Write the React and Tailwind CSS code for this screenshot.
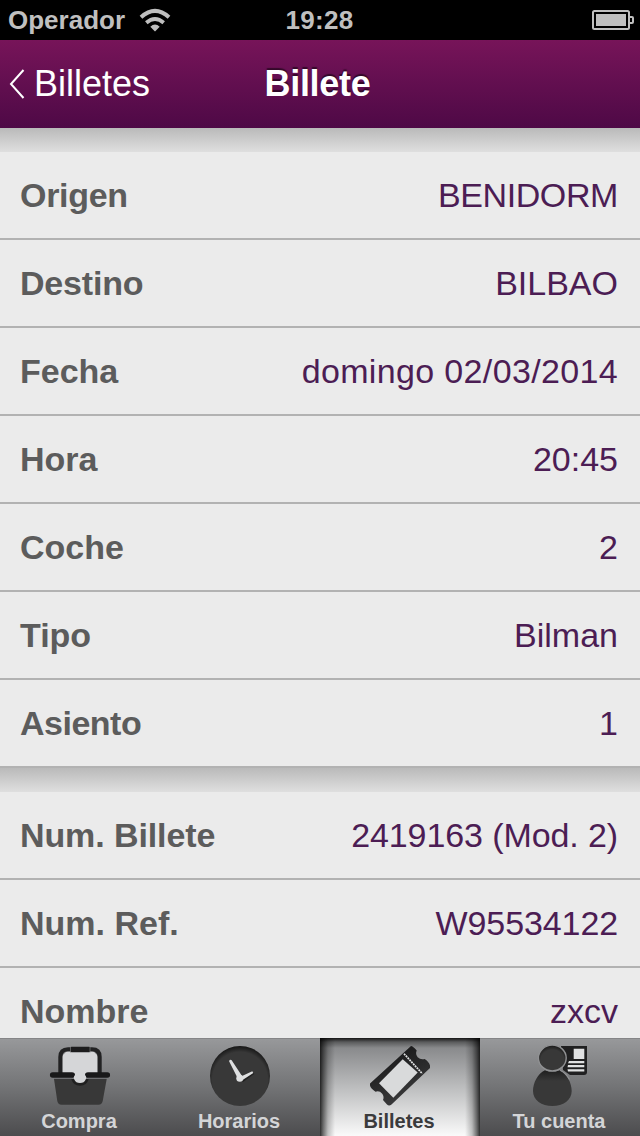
import React, { useState } from 'react';

const trip = [
    { label: 'Origen', value: 'BENIDORM', labelClass: 'tracking-[-0.3px]', valueClass: 'tracking-[-0.4px]' },
    { label: 'Destino', value: 'BILBAO', labelClass: 'tracking-[-0.2px]' },
    { label: 'Fecha', value: 'domingo 02/03/2014', valueClass: 'tracking-[0.35px]' },
    { label: 'Hora', value: '20:45' },
    { label: 'Coche', value: '2' },
    { label: 'Tipo', value: 'Bilman' },
    { label: 'Asiento', value: '1', labelClass: 'tracking-[-0.5px]' },
];

const ticket = [
    { label: 'Num. Billete', value: '2419163 (Mod. 2)', labelClass: 'tracking-[-0.1px]', valueClass: 'tracking-[-0.1px]' },
    { label: 'Num. Ref.', value: 'W95534122', valueClass: 'tracking-[-0.1px]' },
    { label: 'Nombre', value: 'zxcv' },
];

const BasketIcon = () => (
    <svg viewBox="0 0 64 64" className="w-16 h-16">
        <path d="M14 29V12l5-5h26l5 5v17H38a6.2 6.2 0 1 1-12 0z" fill="#d5d6d8" />
        <path d="M12.4 29V13q0-7.600 7.600-7.600h24q7.600 0 7.600 7.600v16" fill="none" stroke="#222223" strokeWidth="4.200" />
        <rect x="22.500" y="2.700" width="19.500" height="5.600" rx="1" fill="#1c1c1d" />
        <path d="M22.500 3v5.500M42 3v5.500" stroke="#77787a" strokeWidth="0.700" />
        <path d="M6 35h19.300a7.200 7.200 0 0 0 13.400 0H58.700L54.700 57q-.7 3.700-4.200 3.700h-37q-3.500 0-4.200-3.700z" fill="#383838" />
        <path d="M23.300 35h17.400a9 9 0 0 1-17.400 0z" fill="#202020" />
        <path d="M4.700 28.200H24q3 .4 3 2.600l-1.500 3H4.700a2.700 2.700 0 0 1 0-5.600zM59.300 28.200H40q-3 .4-3 2.600l1.500 3h20.800a2.700 2.700 0 0 0 0-5.600z" fill="#19191a" />
        <path d="M27 28h10v4q2 1 .8 3.200a6.300 6.300 0 0 1-11.600 0Q25 33 27 32z" fill="#d5d6d8" />
        <path d="M6 34.500h18M40 34.500h18.700" stroke="#6d6e70" strokeWidth="0.900" />
    </svg>
);

const ClockIcon = () => (
    <svg viewBox="0 0 64 64" className="w-16 h-16">
        <defs>
            <radialGradient id="clockFace" cx="0.500" cy="0.560" r="0.560">
                <stop offset="0.820" stopColor="#383838" />
                <stop offset="1" stopColor="#161616" />
            </radialGradient>
        </defs>
        <circle cx="32" cy="32" r="30" fill="url(#clockFace)" />
        <path d="M31 36l-8.600-18 2-.7L35 34.200l10.500-5.700.8 1.500L35 38z" fill="#000" opacity="0.400" />
        <path d="M29.800 34.500l-8.700-17.200q.6-2.200 2.600-1.100L34 31.900l10.300-4.700 1 1.900-10.700 6.800z" fill="#dedfe0" />
        <circle cx="31.800" cy="34.300" r="3.500" fill="#dedfe0" />
    </svg>
);

const TicketIcon = () => (
    <svg viewBox="0 0 64 64" className="w-16 h-16">
        <defs>
            <linearGradient id="ticketBody" x1="0" y1="0" x2="0.500" y2="1">
                <stop offset="0.200" stopColor="#19191a" />
                <stop offset="1" stopColor="#3b3b3c" />
            </linearGradient>
        </defs>
        <path d="M43 2q2 .2 5.700 4.500-1.600 3.500 1 6.700 3 3 7 1.800 4.500 3 5.300 6.500v2.500L23.500 60.500q-2.500 1.800-4.500 0l-4-4.500q1.500-3.500-1-6.500t-6.500-1.800Q2.500 44.500 2 41.500v-2z" fill="url(#ticketBody)" />
        <path d="M34.700 15.300l15 13.200-24.400 25.200L11 39.300z" fill="#d9dadb" />
        <path d="M36 9.700l18.300 20" stroke="#e3e4e5" strokeWidth="1.700" strokeDasharray="1.900 0.800" />
    </svg>
);

const AccountIcon = () => (
    <svg viewBox="0 0 64 64" className="w-16 h-16">
        <defs>
            <radialGradient id="head" cx="0.500" cy="0.600" r="0.600">
                <stop offset="0.700" stopColor="#383838" />
                <stop offset="1" stopColor="#171717" />
            </radialGradient>
            <linearGradient id="torso" x1="0" y1="0" x2="0" y2="1">
                <stop offset="0" stopColor="#1e1e1e" />
                <stop offset="0.300" stopColor="#383838" />
            </linearGradient>
        </defs>
        <path d="M33 2h26v26q0 3-3 3H42l-7-5z" fill="#202021" />
        <path d="M45.700 4.700h10.600V15H45.700zM41 17h15.300v2.200H40zM40 21h16.300v2.200H39.500zM39.500 25.300h16.800v2.200H40z" fill="#e0e1e2" />
        <path d="M17 26.200q7.300 3 14.600 0C39 29.500 43.700 39 43.700 47c0 9-8.500 15-19.300 15S5 56 5 47c0-8 4.600-17.500 12-20.800z" fill="url(#torso)" />
        <path d="M32 26.200Q38 29 41.500 35.500" fill="none" stroke="#909193" strokeWidth="1.200" />
        <ellipse cx="24.300" cy="14" rx="13.900" ry="12.900" fill="url(#head)" stroke="#909193" strokeWidth="1.400" />
    </svg>
);

const tabs = [
    { name: 'Compra', Icon: BasketIcon },
    { name: 'Horarios', Icon: ClockIcon },
    { name: 'Billetes', Icon: TicketIcon },
    { name: 'Tu cuenta', Icon: AccountIcon },
];

const StatusBar = () => (
    <div className="h-10 shrink-0 bg-black text-[#bfbfbf] grid grid-cols-3 items-center pl-2 pr-1.5 text-[26px] leading-10 font-bold">
        <div className="flex items-center gap-3.5">
            <span>Operador</span>
            <svg viewBox="0 0 32 24" className="w-8 h-6" fill="none" stroke="#bfbfbf">
                <path d="M2 9.200q14-12.600 28 0" strokeWidth="4" />
                <path d="M7.300 14.800q8.700-7.600 17.400 0" strokeWidth="3.800" />
                <path d="M11.300 18.700q4.700-4.200 9.400 0L16 23.400z" fill="#bfbfbf" stroke="none" />
            </svg>
        </div>
        <span className="text-center pr-[3px] tracking-[0.3px]">19:28</span>
        <svg viewBox="0 0 42 20" className="w-[42px] h-5 mt-[-1px] justify-self-end" fill="none" stroke="#bfbfbf">
            <rect x="1" y="1" width="36" height="18" rx="1.500" strokeWidth="2" />
            <rect x="4" y="4" width="30" height="12" fill="#bfbfbf" stroke="none" />
            <path d="M38 7h2q1 0 1 1v4q0 1-1 1h-2" strokeWidth="2" />
        </svg>
    </div>
);

const Section = ({ rows }) => (
    <section>
        <div className="h-6 bg-linear-to-b from-[#bababa] to-[#dfdfdf]" />
        {rows.map((row) => (
            <div key={row.label} className="h-[88px] border-b-2 border-[#b2b2b2] flex items-center justify-between pl-5 pr-[22px] text-[34px] whitespace-nowrap">
                <span className={`font-bold text-[#5c5c5c] ${row.labelClass || ''}`}>{row.label}</span>
                <span className={`text-[#4c1d54] ${row.valueClass || ''}`}>{row.value}</span>
            </div>
        ))}
    </section>
);

const App = () => {
    const [activeTab, setActiveTab] = useState('Billetes');

    return (
        <div className="w-[640px] h-[1136px] overflow-hidden flex flex-col bg-[#ebebeb] font-['Liberation_Sans',Arial,sans-serif]">
            <StatusBar />

            <header className="h-[88px] shrink-0 grid grid-cols-3 items-center text-white text-[36px] bg-linear-to-b from-[#771459] to-[#4e0946]">
                <button className="flex items-center gap-2 pl-[9px]">
                    <svg viewBox="0 0 17 32" className="w-[17px] h-8" fill="none" stroke="white" strokeWidth="2">
                        <path d="M14.500 2L2 16l12.500 14" />
                    </svg>
                    Billetes
                </button>
                <h1 className="text-center font-bold tracking-[-0.3px] pr-[5px] [text-shadow:0_-2px_1px_rgba(0,0,0,0.5)]">Billete</h1>
            </header>

            <main className="flex-1 min-h-0 overflow-hidden">
                <Section rows={trip} />
                <Section rows={ticket} />
            </main>

            <nav className="h-[98px] shrink-0 grid grid-cols-4 bg-linear-to-b from-[#98999b] via-[#737476] to-[#4c4c4e]">
                {tabs.map(({ name, Icon }) => (
                    <button
                        key={name}
                        onClick={() => setActiveTab(name)}
                        className={`flex flex-col items-center pt-1.5 text-[20px] leading-6 font-bold ${activeTab === name ? 'text-[#3b3b3c] bg-[linear-gradient(to_right,#000000d0,#00000090_3px,#00000038_8px,transparent_15px,transparent_145px,#00000038_152px,#00000090_157px,#000000d0),linear-gradient(#151515,#5a5b5c_4px,#898a8c_10px,#bdbebf_50px,#fafafa)]' : 'text-[#d4d5d7] shadow-[inset_0_1px_0_#858587]'}`}
                    >
                        <Icon />
                        <span className="mt-[1px] pr-0.5">{name}</span>
                    </button>
                ))}
            </nav>
        </div>
    );
};

export default App;
